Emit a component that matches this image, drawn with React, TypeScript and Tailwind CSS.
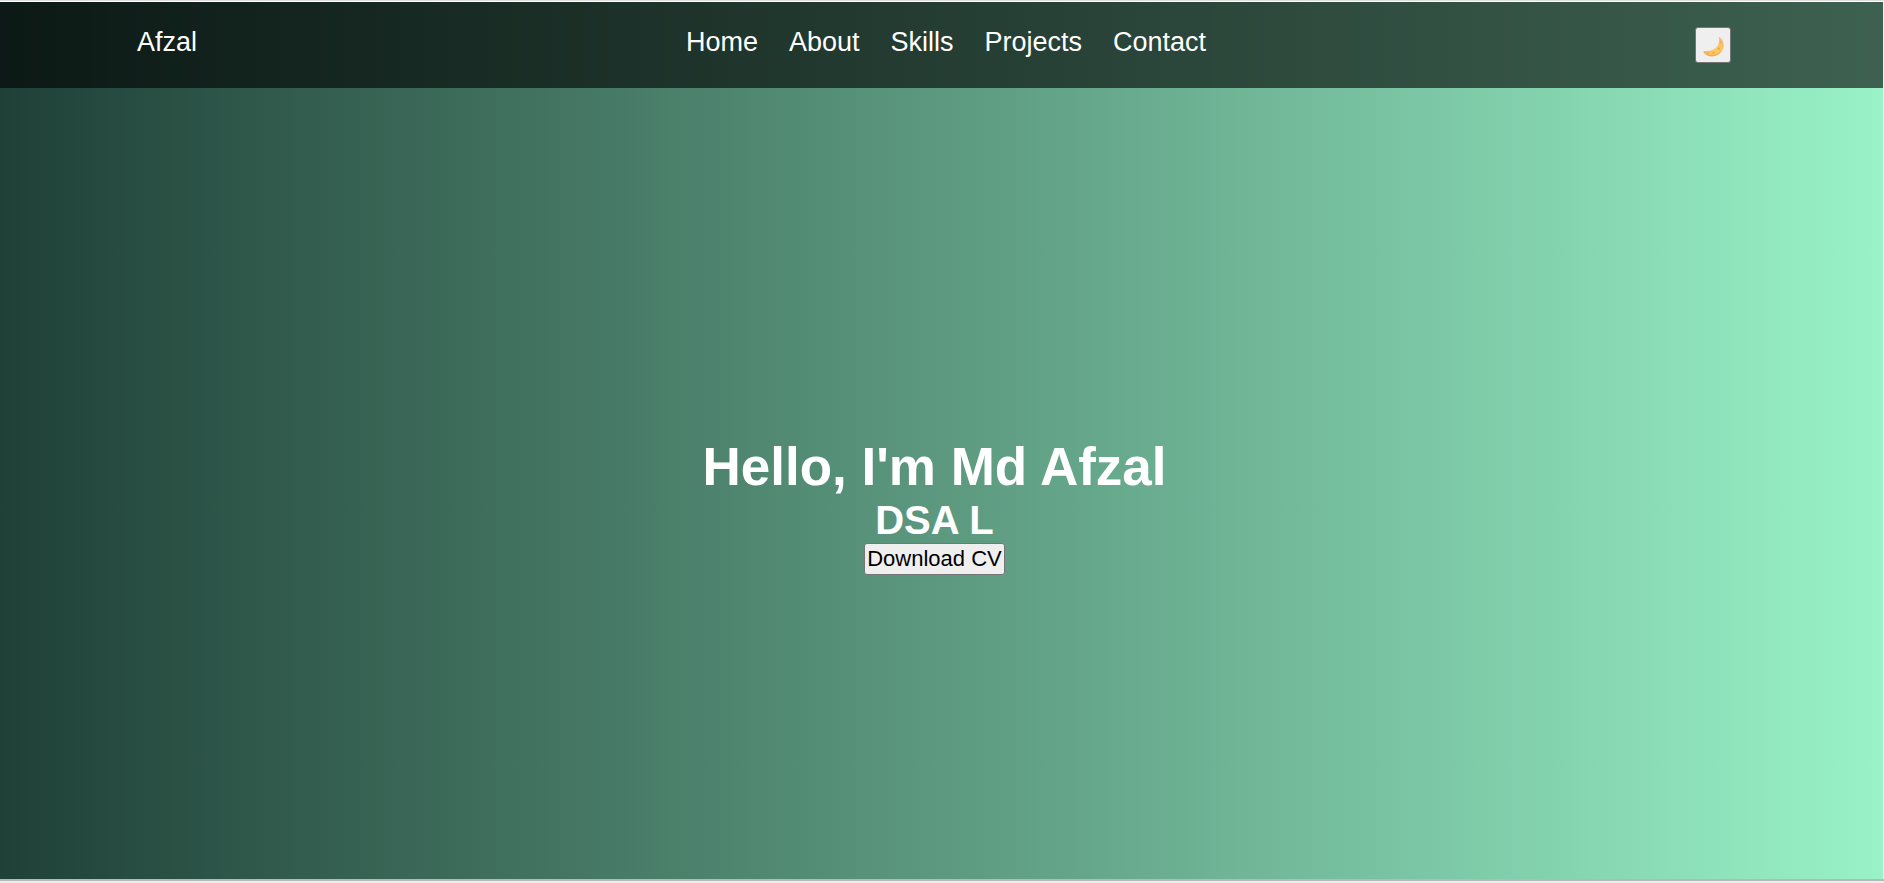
const links = ["Home", "About", "Skills", "Projects", "Contact"];

function Moon() {
  return (
    <svg viewBox="0 0 21 20" className="w-[21px] h-5" aria-hidden="true">
      <defs>
        <linearGradient id="moon" x1="0" y1="1" x2="1" y2="0">
          <stop offset="0" stopColor="#f8b565" />
          <stop offset="0.5" stopColor="#fdcb62" />
          <stop offset="1" stopColor="#f9b468" />
        </linearGradient>
      </defs>
      <path
        d="M16.8 0.3 C20.8 4 22.4 9.5 18.6 14.6 C14 20.8 5 21.2 0.5 15.3 C0 14.3 0.4 13.8 1.4 13.9 C7 14.4 11.8 12.8 14.4 9 C16 6.5 16.3 3.5 16 0.8 C16 0.1 16.4 -0.1 16.8 0.3 Z"
        fill="url(#moon)"
      />
      <path
        d="M1 15.4 C5.2 20.3 13.4 19.8 17.8 14.3"
        fill="none"
        stroke="#e99a52"
        strokeWidth="0.7"
      />
      <circle cx="17.6" cy="5" r="0.8" fill="#e89a55" />
      <circle cx="15.8" cy="11.6" r="1.2" fill="#f1a548" />
      <circle cx="10.6" cy="15.8" r="1.1" fill="#f1a548" />
      <circle cx="5.2" cy="16" r="0.7" fill="#e89a55" />
    </svg>
  );
}

function Navbar() {
  return (
    <nav className="bg-black/60 flex items-start justify-between pl-[137px] pr-[152px] py-[25px] text-white text-[27px] leading-[31px]">
      <div>Afzal</div>
      <ul className="flex gap-[31px]">
        {links.map((link) => (
          <li key={link}>
            <a href={"#" + link.toLowerCase()}>{link}</a>
          </li>
        ))}
      </ul>
      <button
        aria-label="Toggle dark mode"
        className="bg-[#efefef] border border-[#767676] rounded-[3px] size-9 pt-1 flex items-center justify-center"
      >
        <Moon />
      </button>
    </nav>
  );
}

export default function App() {
  return (
    <div className="min-h-screen flex flex-col bg-[#eeeeee] font-['Liberation_Sans',Arial,sans-serif]">
      <div className="h-px bg-[#dedede]"></div>
      <div className="h-px bg-white"></div>
      <div className="flex-1 flex flex-col mr-px bg-linear-to-r/srgb from-[#1f4037] to-[#99f2c8]">
        <Navbar />
        <main className="flex-1 flex flex-col items-center justify-center pt-11 pr-3.5 text-white">
          <h1 className="text-[53px] leading-[60px] font-bold">Hello, I'm Md Afzal</h1>
          <h2 className="text-[40px] leading-[46px] font-bold">DSA L</h2>
          <button className="bg-[#efefef] border border-[#767676] rounded-[3px] text-black text-[22px] leading-7 px-0.5 py-px">
            Download CV
          </button>
        </main>
      </div>
      <div className="h-0.5 bg-[#b8b8b8]"></div>
      <div className="h-0.5"></div>
    </div>
  );
}
